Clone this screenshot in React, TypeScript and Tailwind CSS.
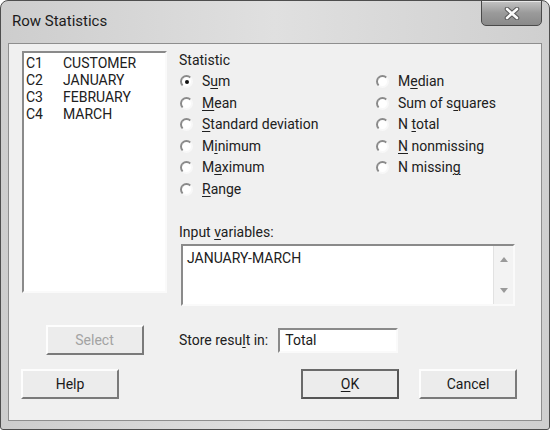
import React, { useState } from 'react';

const leftStats = [
  { key: 'sum', pre: 'S', u: 'u', post: 'm' },
  { key: 'mean', pre: '', u: 'M', post: 'ean' },
  { key: 'std', pre: '', u: 'S', post: 'tandard deviation' },
  { key: 'min', pre: 'M', u: 'i', post: 'nimum' },
  { key: 'max', pre: 'M', u: 'a', post: 'ximum' },
  { key: 'range', pre: '', u: 'R', post: 'ange' },
];

const rightStats = [
  { key: 'median', pre: 'M', u: 'e', post: 'dian' },
  { key: 'ss', pre: 'Sum of s', u: 'q', post: 'uares' },
  { key: 'ntotal', pre: 'N ', u: 't', post: 'otal' },
  { key: 'nnon', pre: '', u: 'N', post: ' nonmissing' },
  { key: 'nmiss', pre: 'N missin', u: 'g', post: '' },
];

const columns = [
  ['C1', 'CUSTOMER'],
  ['C2', 'JANUARY'],
  ['C3', 'FEBRUARY'],
  ['C4', 'MARCH'],
];

const Radio = ({ checked }: { checked: boolean }) => (
  <span className="w-[13px] h-[13px] rounded-full border-2 border-t-[#8a8a8a] border-l-[#8a8a8a] border-b-[#f8f8f8] border-r-[#f8f8f8] bg-white flex items-center justify-center shrink-0">
    {checked && <span className="w-[4px] h-[4px] rounded-full bg-[#111]" />}
  </span>
);

const Btn = ({ children, disabled, primary, className = '' }: { children: React.ReactNode; disabled?: boolean; primary?: boolean; className?: string }) => (
  <button
    className={`w-[98px] h-[30px] bg-[#ececec] text-[14px] ${disabled ? 'text-[#a3a3a3]' : 'text-[#1a1a1a]'} ${
      primary
        ? 'border-2 border-t-[#6a6a6a] border-l-[#6a6a6a] border-r-[#555] border-b-[#555]'
        : 'border-2 border-t-[#fdfdfd] border-l-[#fdfdfd] border-r-[#7a7a7a] border-b-[#7a7a7a]'
    } ${className}`}
  >
    {children}
  </button>
);

export default function App() {
  const [stat, setStat] = useState('sum');

  const renderStat = (s: { key: string; pre: string; u: string; post: string }) => (
    <label key={s.key} className="h-[21.5px] flex items-center cursor-default" onClick={() => setStat(s.key)}>
      <Radio checked={stat === s.key} />
      <span className="ml-[9px]">
        {s.pre}
        <span className="underline underline-offset-2">{s.u}</span>
        {s.post}
      </span>
    </label>
  );

  return (
    <div className="w-[550px] h-[430px] bg-white font-['Roboto','Liberation_Sans',sans-serif] text-[14px] text-[#202020] leading-[17px]">
      <div className="w-full h-full rounded-t-[8px] rounded-b-[3px] border border-[#4e4e4e] bg-gradient-to-r from-[#cdcdcd] via-[#e0e0e0] to-[#cfcfcf] flex flex-col px-[7px] pb-[8px]">
        {/* title bar */}
        <div className="h-[42px] flex items-start justify-between">
          <div className="pt-[12px] pl-[4px] text-[15px] text-[#1c1c1c]">Row Statistics</div>
          <div className="w-[61px] h-[26px] -mt-[1px] rounded-b-[5px] border border-[#4a4a4a] bg-gradient-to-b from-[#c4c4c4] via-[#9a9a9a] to-[#8a8a8a] flex items-center justify-center shadow-[inset_0_1px_0_rgba(255,255,255,0.6)]">
            <svg width="16" height="13" viewBox="0 0 16 13">
              <path d="M3 2 L13 11 M13 2 L3 11" stroke="#555" strokeWidth="4.5" strokeLinecap="round" />
              <path d="M3 2 L13 11 M13 2 L3 11" stroke="#fafafa" strokeWidth="2.6" strokeLinecap="round" />
            </svg>
          </div>
        </div>

        {/* client area */}
        <div className="flex-1 border border-[#8e8e8e] bg-[#f0f0f0] pl-[12px] pt-[7px]">
          <div className="flex items-start">
            {/* column list */}
            <div className="ml-[1px] w-[145px] h-[242px] border-2 border-t-[#8a8a8a] border-l-[#8a8a8a] border-b-[#fafafa] border-r-[#fafafa] bg-white pl-[2px] pt-[2px]">
              {columns.map(([c, n]) => (
                <div key={c} className="flex h-[17px] items-center">
                  <span className="w-[37px]">{c}</span>
                  <span>{n}</span>
                </div>
              ))}
            </div>

            {/* statistic panel */}
            <div className="ml-[12px] pt-[1px]">
              <div>Statistic</div>
              <div className="mt-[2px] flex">
                <div className="w-[197px] pl-[1px] flex flex-col">{leftStats.map(renderStat)}</div>
                <div className="flex flex-col">{rightStats.map(renderStat)}</div>
              </div>
              <div className="mt-[24px]">
                Input <span className="underline underline-offset-2">v</span>ariables:
              </div>
              <div className="mt-[3px] ml-[2px] w-[334px] h-[62px] border-2 border-t-[#8a8a8a] border-l-[#8a8a8a] border-b-[#fafafa] border-r-[#fafafa] bg-white flex">
                <div className="flex-1 pl-[4px] pt-[4px]">JANUARY-MARCH</div>
                <div className="w-[20px] bg-[#f3f3f3] border-l border-[#e2e2e2] flex flex-col items-center justify-between py-[11px]">
                  <svg width="8" height="5" viewBox="0 0 8 5">
                    <path d="M0 5 L4 0 L8 5 Z" fill="#9a9a9a" />
                  </svg>
                  <svg width="8" height="5" viewBox="0 0 8 5">
                    <path d="M0 0 L4 5 L8 0 Z" fill="#9a9a9a" />
                  </svg>
                </div>
              </div>
            </div>
          </div>

          {/* select / store row */}
          <div className="mt-[19px] flex items-center">
            <div className="ml-[1px] w-[145px] flex justify-center">
              <Btn disabled>Select</Btn>
            </div>
            <span className="ml-[12px]">
              Store resu<span className="underline underline-offset-2">l</span>t in:
            </span>
            <div className="ml-[10px] w-[120px] h-[25px] border-2 border-t-[#8a8a8a] border-l-[#8a8a8a] border-b-[#fafafa] border-r-[#fafafa] bg-white pl-[5px] flex items-center">
              Total
            </div>
          </div>

          {/* bottom buttons */}
          <div className="mt-[14px] flex">
            <Btn>Help</Btn>
            <Btn primary className="ml-[182px]">
              <span className="underline underline-offset-2">O</span>K
            </Btn>
            <Btn className="ml-[20px]">Cancel</Btn>
          </div>
        </div>
      </div>
    </div>
  );
}
